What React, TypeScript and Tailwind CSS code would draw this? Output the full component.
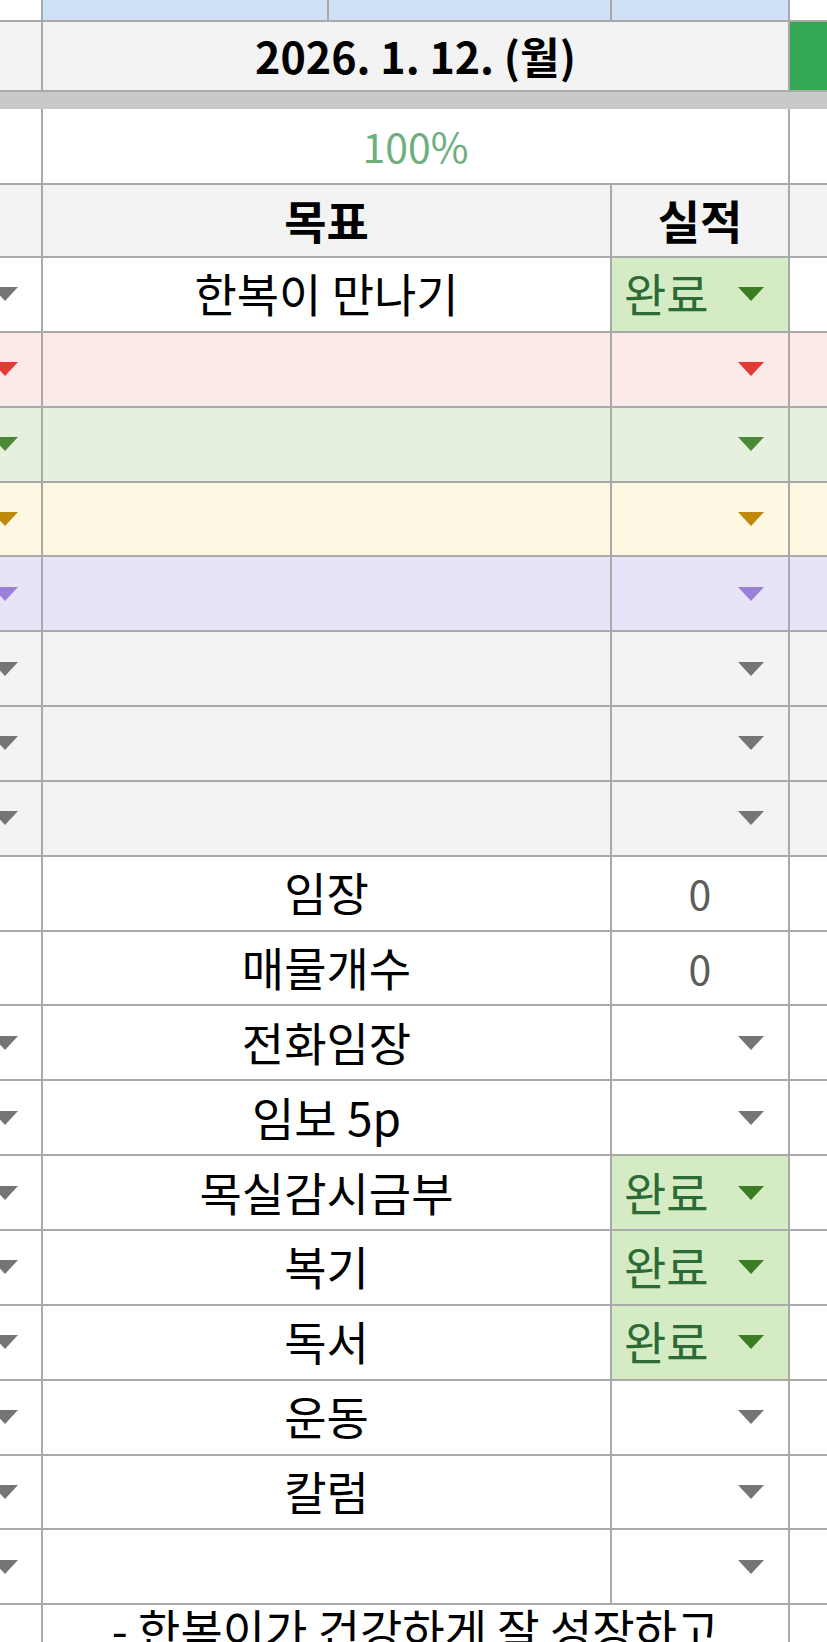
import React from 'react';

type Row = {
    goal: string;
    bg: string;
    tri: string;
    leftTri: boolean;
    result?: 'done' | 'zero' | 'drop' | 'none';
};

const LINE = 'border-[#a9a9a9]';

const GRAY_TRI = '#757575';

const rows: Row[] = [
    { goal: '한복이 만나기', bg: 'bg-white', tri: GRAY_TRI, leftTri: true, result: 'done' },
    { goal: '', bg: 'bg-[#fce8e6]', tri: '#e53935', leftTri: true, result: 'drop' },
    { goal: '', bg: 'bg-[#e6f0df]', tri: '#4b8a34', leftTri: true, result: 'drop' },
    { goal: '', bg: 'bg-[#fef7e2]', tri: '#bf8a0a', leftTri: true, result: 'drop' },
    { goal: '', bg: 'bg-[#e8e3f6]', tri: '#9b80d8', leftTri: true, result: 'drop' },
    { goal: '', bg: 'bg-[#f3f3f3]', tri: GRAY_TRI, leftTri: true, result: 'drop' },
    { goal: '', bg: 'bg-[#f3f3f3]', tri: GRAY_TRI, leftTri: true, result: 'drop' },
    { goal: '', bg: 'bg-[#f3f3f3]', tri: GRAY_TRI, leftTri: true, result: 'drop' },
    { goal: '임장', bg: 'bg-white', tri: GRAY_TRI, leftTri: false, result: 'zero' },
    { goal: '매물개수', bg: 'bg-white', tri: GRAY_TRI, leftTri: false, result: 'zero' },
    { goal: '전화임장', bg: 'bg-white', tri: GRAY_TRI, leftTri: true, result: 'drop' },
    { goal: '임보 5p', bg: 'bg-white', tri: GRAY_TRI, leftTri: true, result: 'drop' },
    { goal: '목실감시금부', bg: 'bg-white', tri: GRAY_TRI, leftTri: true, result: 'done' },
    { goal: '복기', bg: 'bg-white', tri: GRAY_TRI, leftTri: true, result: 'done' },
    { goal: '독서', bg: 'bg-white', tri: GRAY_TRI, leftTri: true, result: 'done' },
    { goal: '운동', bg: 'bg-white', tri: GRAY_TRI, leftTri: true, result: 'drop' },
    { goal: '칼럼', bg: 'bg-white', tri: GRAY_TRI, leftTri: true, result: 'drop' },
    { goal: '', bg: 'bg-white', tri: GRAY_TRI, leftTri: true, result: 'drop' },
];

// dropdown arrow used by sheet data-validation cells
const Tri = ({ color, className = '' }: { color: string; className?: string }) => (
    <svg width="26" height="14" viewBox="0 0 26 14" className={`shrink-0 ${className}`}>
        <polygon points="0,0 26,0 13,14" fill={color} />
    </svg>
);

const ResultCell = ({ row }: { row: Row }) => {
    if (row.result === 'done') {
        return (
            <div className={`w-[178px] shrink-0 border-r-2 ${LINE} bg-[#d5ebc3] flex items-center justify-between pl-[12px] pr-[24px]`}>
                <span className="text-[#2c6b35] text-[46px] leading-none pb-[4px]">완료</span>
                <Tri color="#3b7d22" />
            </div>
        );
    }
    if (row.result === 'zero') {
        return (
            <div className={`w-[178px] shrink-0 border-r-2 ${LINE} flex items-center justify-center`}>
                <span className="text-[#5c5c5c] text-[41px] leading-none pb-[2px]">0</span>
            </div>
        );
    }
    return (
        <div className={`w-[178px] shrink-0 border-r-2 ${LINE} flex items-center justify-end pr-[24px]`}>
            <Tri color={row.tri} />
        </div>
    );
};

const DataRow = ({ row }: { row: Row }) => (
    <div className={`flex h-[74.85px] border-b-2 ${LINE} ${row.bg}`}>
        <div className={`w-[43px] shrink-0 border-r-2 ${LINE} overflow-hidden flex items-center`}>
            {row.leftTri && <Tri color={row.tri} className="-ml-[8px]" />}
        </div>
        <div className={`w-[569px] shrink-0 border-r-2 ${LINE} flex items-center justify-center pb-[4px]`}>
            <span className="text-[46px] leading-none text-black">{row.goal}</span>
        </div>
        <ResultCell row={row} />
        <div className="flex-1" />
    </div>
);

export default function App() {
    return (
        <div className="w-[827px] h-[1642px] overflow-hidden bg-white" style={{ fontFamily: '"Noto Sans CJK KR", "Liberation Sans", sans-serif' }}>
            {/* top strip */}
            <div className={`flex h-[22px] border-b-2 ${LINE}`}>
                <div className={`w-[43px] shrink-0 border-r-2 ${LINE} bg-white`} />
                <div className={`w-[286px] shrink-0 border-r-2 ${LINE} bg-[#cfe1f7]`} />
                <div className={`w-[283px] shrink-0 border-r-2 ${LINE} bg-[#cfe1f7]`} />
                <div className={`w-[178px] shrink-0 border-r-2 ${LINE} bg-[#cfe1f7]`} />
                <div className="flex-1 bg-white" />
            </div>

            {/* date */}
            <div className={`flex h-[70px] border-b-2 ${LINE}`}>
                <div className={`w-[43px] shrink-0 border-r-2 ${LINE} bg-[#f3f3f3]`} />
                <div className={`w-[747px] shrink-0 border-r-2 ${LINE} bg-[#f3f3f3] flex items-center justify-center`}>
                    <span className="text-[43px] font-bold leading-none text-black pb-[2px]">2026. 1. 12. (월)</span>
                </div>
                <div className="flex-1 bg-[#34a853]" />
            </div>

            <div className="h-[17px] bg-[#c9c9c9]" />

            {/* progress */}
            <div className={`flex h-[76px] border-b-2 ${LINE}`}>
                <div className={`w-[43px] shrink-0 border-r-2 ${LINE}`} />
                <div className={`w-[747px] shrink-0 border-r-2 ${LINE} flex items-center justify-center`}>
                    <span className="text-[41px] leading-none text-[#6fae7e] pb-[2px]">100%</span>
                </div>
                <div className="flex-1" />
            </div>

            {/* header */}
            <div className={`flex h-[73px] border-b-2 ${LINE} bg-[#f3f3f3]`}>
                <div className={`w-[43px] shrink-0 border-r-2 ${LINE}`} />
                <div className={`w-[569px] shrink-0 border-r-2 ${LINE} flex items-center justify-center pb-[4px]`}>
                    <span className="text-[46px] font-bold leading-none text-black">목표</span>
                </div>
                <div className={`w-[178px] shrink-0 border-r-2 ${LINE} flex items-center justify-center pb-[4px]`}>
                    <span className="text-[46px] font-bold leading-none text-black">실적</span>
                </div>
                <div className="flex-1" />
            </div>

            {rows.map((row, i) => (
                <DataRow key={i} row={row} />
            ))}

            {/* note */}
            <div className="flex h-[120px]">
                <div className={`w-[43px] shrink-0 border-r-2 ${LINE}`} />
                <div className={`w-[747px] shrink-0 border-r-2 ${LINE} flex justify-center`}>
                    <span className="text-[46px] leading-none text-black">- 한복이가 건강하게 잘 성장하고</span>
                </div>
                <div className="flex-1" />
            </div>
        </div>
    );
}
